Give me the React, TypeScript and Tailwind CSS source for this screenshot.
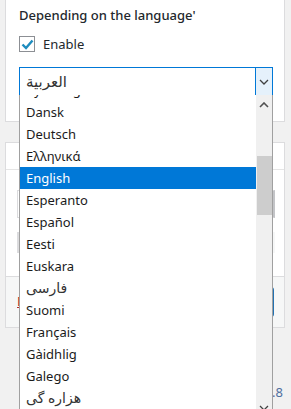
import React from "react";

const langs = [
  "Cymraeg",
  "Dansk",
  "Deutsch",
  "Ελληνικά",
  "English",
  "Esperanto",
  "Español",
  "Eesti",
  "Euskara",
  "فارسی",
  "Suomi",
  "Français",
  "Gàidhlig",
  "Galego",
  "هزاره گی",
  "עִבְרִית",
];

const arabic = (s: string) => /[\u0600-\u06FF]/.test(s);

function ChevronDown() {
  return (
    <svg width="10" height="6" viewBox="0 0 10 6">
      <path d="M1 1 L5 5 L9 1" fill="none" stroke="#404040" strokeWidth="1.3" />
    </svg>
  );
}
function ChevronUp() {
  return (
    <svg width="10" height="6" viewBox="0 0 10 6">
      <path d="M1 5 L5 1 L9 5" fill="none" stroke="#505050" strokeWidth="1.6" />
    </svg>
  );
}

export default function App() {
  return (
    <div
      className="relative w-[291px] h-[409px] overflow-hidden bg-[#f1f1f1] text-[#23282d]"
      style={{ fontFamily: '"Noto Sans", "DejaVu Sans", sans-serif' }}
    >
      {/* top panel */}
      <div className="ml-[5px] w-[280px] h-[122px] bg-white border border-t-0 border-[#dcdcde] pl-[13px] pt-[5px]">
        <div className="text-[13px] leading-[20px] font-medium">Depending on the language'</div>
        <div className="flex items-center mt-[11px] h-[16px]">
          <div className="w-[16px] h-[16px] border border-[#8c8f94] bg-white flex items-center justify-center">
            <svg width="13" height="11" viewBox="0 0 13 11">
              <path d="M1.5 5.5 L5 9 L11.5 1.5" fill="none" stroke="#1e8cbe" strokeWidth="2.4" />
            </svg>
          </div>
          <span className="ml-[8px] text-[13px] leading-[20px]">Enable</span>
        </div>
      </div>

      {/* second panel */}
      <div className="mt-[20px] ml-[5px] w-[280px] h-[186px] bg-white border border-[#dcdcde] flex flex-col">
        <div className="h-[27px] border-b border-[#e5e5e5]" />
        <div className="mt-[20px] ml-[11px] w-[258px] h-[28px] border border-[#dcdcde] border-r-2 border-r-[#c3c4c7]" />
        <div className="mt-[14px] ml-[11px] w-[258px] h-[21px] border-l-2 border-[#dcdcde] bg-[#f6f7f7]" />
        <div className="mt-auto h-[51px] border-t border-[#dcdcde] bg-[#f6f7f7] flex items-center justify-between pl-[11px] pr-[10px]">
          <span className="text-[13px] text-[#b32d2e] underline">Delete</span>
          <div className="w-[70px] h-[30px] rounded-[3px] bg-[#2271b1]" />
        </div>
      </div>

      <div className="mt-[56px] pr-[8px] text-right text-[13px] leading-[16px] text-[#4f6f9f]">
        Version 5.9.8
      </div>

      {/* select */}
      <div className="absolute left-[19px] top-[67px] w-[254px] h-[29px] border border-[#0078d7] bg-white flex">
        <div className="flex-1 pl-[6px] text-[15px] leading-[26px] text-[#333]">العربية</div>
        <div className="w-[17px] h-[27px] bg-[#e5f1fb] border-l border-[#0078d7] flex items-center justify-center">
          <ChevronDown />
        </div>
      </div>

      {/* dropdown list */}
      <div className="absolute left-[19px] top-[95px] w-[254px] h-[330px] border-x border-[#a0a0a0] bg-white flex">
        <div className="w-[236px] h-full overflow-hidden">
          <div className="-mt-[16px]">
            {langs.map((l) => (
              <div
                key={l}
                className={
                  "h-[22px] pl-[6px] leading-[22px] whitespace-nowrap " +
                  (arabic(l) ? "text-[14px] " : "text-[13px] ") +
                  (l === "English"
                    ? "bg-[#0078d7] text-white"
                    : arabic(l)
                    ? "text-[#333]"
                    : "text-[#1b1b1b]")
                }
              >
                {l}
              </div>
            ))}
          </div>
        </div>
        <div className="w-[16px] h-full bg-[#f0f0f0] flex flex-col items-center">
          <div className="h-[17px] mt-[1px] flex items-center">
            <ChevronUp />
          </div>
          <div className="mt-[43px] w-[15px] h-[59px] bg-[#cdcdcd]" />
          <div className="mt-[184px] h-[17px] flex items-center">
            <ChevronDown />
          </div>
        </div>
      </div>
    </div>
  );
}
